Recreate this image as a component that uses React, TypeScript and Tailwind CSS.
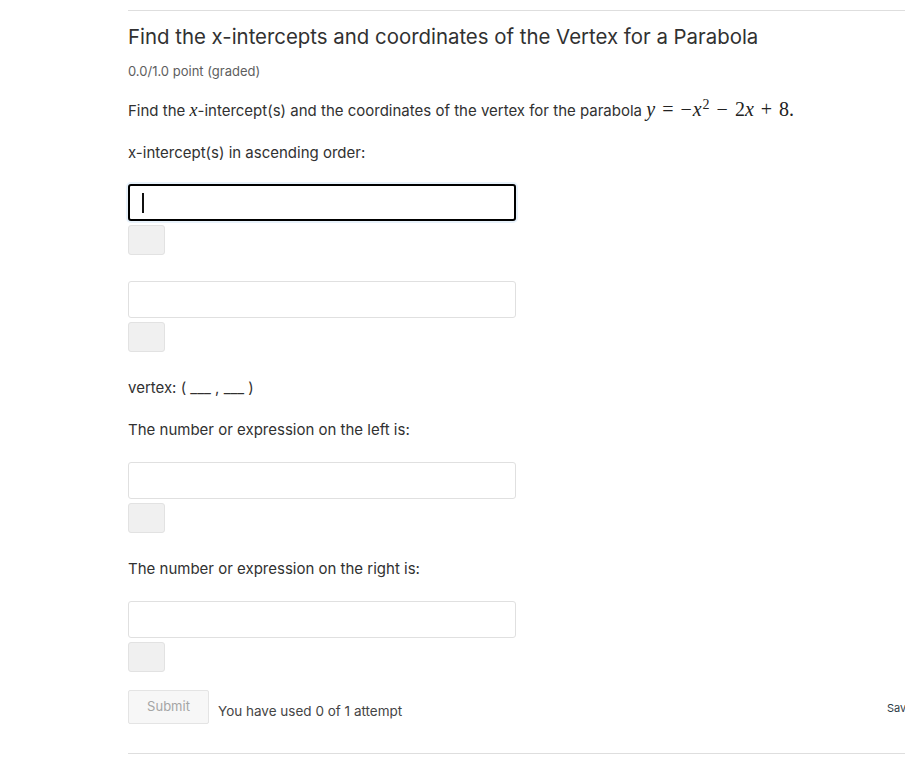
import React from 'react';

function AnswerField({ focused = false }: { focused?: boolean }) {
  return (
    <div>
      <div
        className={
          'h-[37px] w-[388px] rounded-[3px] bg-white flex items-center px-3 ' +
          (focused ? 'border-2 border-black shadow-[0_0_0_2px_#e8f2fb]' : 'border border-[#e0e0e0]')
        }
      >
        {focused && <span className="block w-[2px] h-[20px] bg-[#111]" />}
      </div>
      <div className="mt-[4px] h-[30px] w-[37px] rounded-[3px] bg-[#f0f0f0] border border-[#e2e2e2]" />
    </div>
  );
}

function M({ children }: { children: React.ReactNode }) {
  return <span className="font-['Liberation_Serif',serif] text-[20px] leading-[20px] text-[#222]">{children}</span>;
}

function Rel({ children }: { children: React.ReactNode }) {
  return <span className="mx-[7px]">{children}</span>;
}

function Bin({ children }: { children: React.ReactNode }) {
  return <span className="mx-[7px]">{children}</span>;
}

export default function App() {
  return (
    <div className="w-[905px] h-[767px] overflow-hidden bg-white font-['Inter',sans-serif] text-[#313131]">
      <div className="ml-[128px] w-[820px] pt-[10px]">
        <div className="border-t border-[#dedede]" />
        <h2 className="mt-[13px] text-[20.4px] leading-[26px] text-[#313131]">
          Find the x-intercepts and coordinates of the Vertex for a Parabola
        </h2>
        <div className="mt-[13px] text-[13px] leading-[16px] text-[#5e5e5e]">0.0/1.0 point (graded)</div>

        <p className="mt-[20px] text-[15px] leading-[22px]">
          Find the{' '}
          <span className="font-['Liberation_Serif',serif] text-[18px] leading-[18px] text-[#222]">
            <i>x</i>
          </span>
          -intercept(s) and the coordinates of the vertex for the parabola{' '}
          <M>
            <i>y</i>
            <Rel>=</Rel>
            <span className="mr-[1px]">−</span>
            <i>x</i>
            <sup className="text-[14px] ml-[1px]">2</sup>
            <Bin>−</Bin>2<i>x</i>
            <Bin>+</Bin>8.
          </M>
        </p>

        <p className="mt-[20px] text-[15px] leading-[22px]">x-intercept(s) in ascending order:</p>

        <div className="mt-[20px]">
          <AnswerField focused />
        </div>
        <div className="mt-[26px]">
          <AnswerField />
        </div>

        <p className="mt-[25px] text-[15px] leading-[22px]">vertex: ( ___ , ___ )</p>

        <p className="mt-[20px] text-[15px] leading-[22px]">The number or expression on the left is:</p>
        <div className="mt-[21px]">
          <AnswerField />
        </div>

        <p className="mt-[25px] text-[15px] leading-[22px]">The number or expression on the right is:</p>
        <div className="mt-[21px]">
          <AnswerField />
        </div>

        <div className="mt-[18px] flex items-start">
          <button className="h-[34px] w-[81px] border border-[#e4e4e4] bg-[#f7f7f7] text-[13px] text-[#a5a5a5] rounded-[2px]">
            Submit
          </button>
          <span className="ml-[9px] mt-[12px] text-[13.5px] leading-[18px] text-[#454545]">You have used 0 of 1 attempt</span>
        </div>

        <div className="mt-[29px] border-t border-[#dedede]" />
      </div>
      <span className="absolute left-[887px] top-[700px] text-[11px] text-[#2d3b45]">Save</span>
    </div>
  );
}
